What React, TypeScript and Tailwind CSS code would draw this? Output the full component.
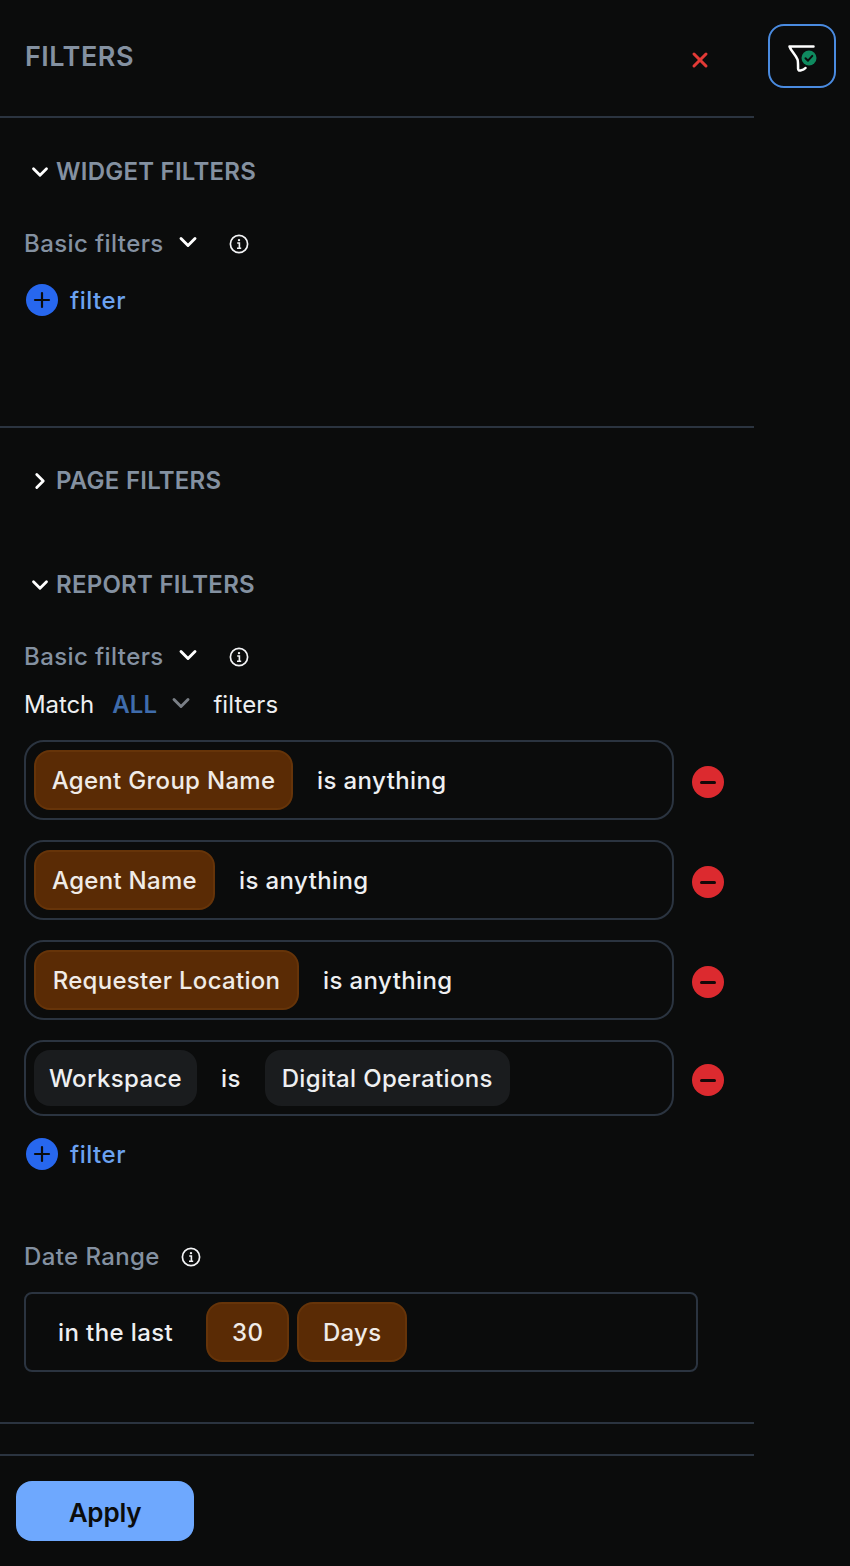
import { ChevronDown, ChevronRight, Plus, X } from "lucide-react";
import type { ReactNode } from "react";

function InfoIcon({ className }: { className?: string }) {
  return (
    <svg viewBox="0 0 20 20" fill="none" className={className}>
      <circle cx="10" cy="10" r="8.6" stroke="#f3f4f6" strokeWidth="1.7" />
      <circle cx="10" cy="6.1" r="1.2" fill="#f3f4f6" />
      <path d="M8.2 9h2.2v5.2M8 14.3h4.2" stroke="#f3f4f6" strokeWidth="1.6" />
    </svg>
  );
}

function FunnelCheck() {
  return (
    <svg viewBox="0 0 32 32" fill="none" className="h-8 w-8">
      <path
        d="M3.5 6.500h24M3.500 6.500c1.500 4.500 5.500 7.500 8 13 .7 1.600.5 7 .6 9.500.1 1.300 1 1.700 2.200 1.500 1.700-.3 3.700-.6 5.200-2.500"
        stroke="#ffffff"
        strokeWidth="2.5"
        strokeLinecap="round"
        strokeLinejoin="round"
      />
      <circle cx="23" cy="18" r="7.500" fill="#0f8a5f" />
      <path d="M19.500 18.200l2.500 2.500 4.300-4.800" stroke="#0b0c0c" strokeWidth="2" strokeLinecap="round" strokeLinejoin="round" />
    </svg>
  );
}

function SectionTitle({ open, children }: { open: boolean; children: ReactNode }) {
  return (
    <div className="flex h-8 items-center pl-[24px]">
      <span className="flex w-[32px] justify-center">
        {open ? (
          <ChevronDown className="h-[26px] w-[26px] text-white" strokeWidth={2.6} />
        ) : (
          <ChevronRight className="h-[26px] w-[26px] text-white" strokeWidth={2.6} />
        )}
      </span>
      <span className="text-[24px] font-semibold tracking-[0.25px] text-[#8491a1]">{children}</span>
    </div>
  );
}

function BasicFilters() {
  return (
    <div className="flex h-8 items-center pl-[24px]">
      <span className="text-[24px] font-medium tracking-[0.4px] text-[#8491a1]">Basic filters</span>
      <ChevronDown className="ml-[10px] h-[28px] w-[28px] -translate-y-[2px] text-white" strokeWidth={2.5} />
      <InfoIcon className="ml-[27px] h-[20px] w-[20px]" />
    </div>
  );
}

function AddFilter() {
  return (
    <div className="flex h-8 items-center gap-[12px] pl-[26px]">
      <span className="flex h-8 w-8 items-center justify-center rounded-full bg-[#2767ee]">
        <Plus className="h-6 w-6 text-[#0b0c0c]" strokeWidth={2.2} />
      </span>
      <span className="pt-[2px] text-[24px] font-medium tracking-[0.5px] text-[#6ba2f0]">filter</span>
    </div>
  );
}

function Remove() {
  return (
    <span className="ml-[18px] mt-[4px] flex h-8 w-8 items-center justify-center rounded-full bg-[#dc2a2f]">
      <span className="h-[3px] w-[16px] rounded-full bg-[#160809]" />
    </span>
  );
}

function OrangeChip({ children, className }: { children: ReactNode; className: string }) {
  return (
    <span
      className={`flex h-[60px] items-center justify-center rounded-[16px] border-2 border-[#663409] bg-[#5a2b05] pt-[2px] text-[24px] font-medium tracking-[0.3px] text-[#f0ebe7] ${className}`}
    >
      {children}
    </span>
  );
}

function GrayChip({ children, className }: { children: ReactNode; className: string }) {
  return (
    <span
      className={`flex h-[56px] items-center justify-center rounded-[16px] bg-[#1a1c1e] pt-[2px] text-[24px] font-medium tracking-[0.35px] text-[#eeeff1] ${className}`}
    >
      {children}
    </span>
  );
}

function AnythingRow({ name, chipWidth, gap }: { name: string; chipWidth: string; gap: string }) {
  return (
    <div className="flex items-center">
      <div className="flex h-[80px] w-[650px] items-center rounded-[20px] border-2 border-[#2b3440] pl-[8px]">
        <OrangeChip className={chipWidth}>{name}</OrangeChip>
        <span className={`${gap} pt-[2px] text-[24px] font-medium tracking-[0.4px] text-[#eeeff1]`}>is anything</span>
      </div>
      <Remove />
    </div>
  );
}

export default function App() {
  return (
    <div className="flex h-[1566px] w-[850px] overflow-hidden bg-[#0b0c0c] font-['Inter',sans-serif]">
      <div className="flex w-[754px] flex-col">
        <div className="flex h-[118px] items-center justify-between border-b-2 border-[#2b3440] pb-[2px] pl-[25px] pr-[42px]">
          <span className="text-[27px] font-semibold tracking-[0.5px] text-[#8491a1]">FILTERS</span>
          <X className="mt-[6px] h-[24px] w-[24px] text-[#e33a36]" strokeWidth={3} />
        </div>

        <div className="flex h-[310px] flex-col border-b-2 border-[#2b3440] pt-[38px]">
          <SectionTitle open>WIDGET FILTERS</SectionTitle>
          <div className="mt-[40px]">
            <BasicFilters />
          </div>
          <div className="mt-[24px]">
            <AddFilter />
          </div>
        </div>

        <div className="pt-[37px]">
          <SectionTitle open={false}>PAGE FILTERS</SectionTitle>
        </div>

        <div className="pt-[72px]">
          <SectionTitle open>REPORT FILTERS</SectionTitle>
          <div className="mt-[40px]">
            <BasicFilters />
          </div>
          <div className="mt-[16px] flex h-8 items-center pl-[24px] text-[24px] tracking-[-0.1px]">
            <span className="text-[#eeeff1]">Match</span>
            <span className="ml-[18px] font-semibold tracking-[0.2px] text-[#3f6cab]">ALL</span>
            <ChevronDown className="ml-[10px] h-[28px] w-[28px] -translate-y-[2px] text-[#7a7f86]" strokeWidth={2.5} />
            <span className="ml-[18px] tracking-[0.1px] text-[#eeeff1]">filters</span>
          </div>

          <div className="mt-[19px] flex flex-col gap-[20px] pl-[24px]">
            <AnythingRow name="Agent Group Name" chipWidth="w-[259px]" gap="ml-[24px]" />
            <AnythingRow name="Agent Name" chipWidth="w-[181px]" gap="ml-[24px]" />
            <AnythingRow name="Requester Location" chipWidth="w-[265px]" gap="ml-[24px]" />
            <div className="flex items-center">
              <div className="flex h-[76px] w-[650px] items-center rounded-[20px] border-2 border-[#2b3440] pl-[8px]">
                <GrayChip className="w-[163px]">Workspace</GrayChip>
                <span className="ml-[24px] pt-[2px] text-[24px] font-medium tracking-[0.4px] text-[#eeeff1]">is</span>
                <GrayChip className="ml-[24px] w-[245px]">Digital Operations</GrayChip>
              </div>
              <Remove />
            </div>
          </div>

          <div className="mt-[22px]">
            <AddFilter />
          </div>

          <div className="mt-[71px] flex h-8 items-center pl-[24px]">
            <span className="text-[24px] font-medium tracking-[0.4px] text-[#8491a1]">Date Range</span>
            <InfoIcon className="ml-[21px] h-[20px] w-[20px]" />
          </div>

          <div className="ml-[24px] mt-[19px] flex h-[80px] w-[674px] items-center gap-[8px] rounded-[8px] border-2 border-[#2b3440] pl-[32px]">
            <span className="mr-[25px] pt-[2px] text-[24px] font-medium tracking-[0.4px] text-[#eeeff1]">in the last</span>
            <OrangeChip className="w-[83px]">30</OrangeChip>
            <OrangeChip className="w-[110px]">Days</OrangeChip>
          </div>
        </div>

        <div className="mt-[50px] h-[34px] border-y-2 border-[#2b3440]" />

        <div className="pl-[16px] pt-[25px]">
          <button className="h-[60px] w-[178px] rounded-[16px] bg-[#6ea8fe] pt-[2px] text-[26px] font-semibold tracking-[-0.2px] text-[#0b0c0c]">
            Apply
          </button>
        </div>
      </div>

      <div className="flex-1 pl-[14px] pt-[24px]">
        <div className="flex h-[64px] w-[68px] items-center justify-center rounded-[16px] border-2 border-[#4a8be0]">
          <FunnelCheck />
        </div>
      </div>
    </div>
  );
}
